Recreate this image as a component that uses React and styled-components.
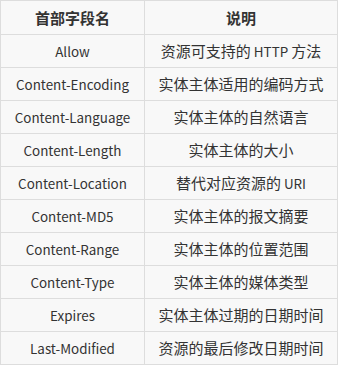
import React from "react";
import styled, { createGlobalStyle } from "styled-components";

const Global = createGlobalStyle`
  html, body { margin: 0; padding: 0; background: #ffffff; }
  body { font-family: "Noto Sans CJK SC", "Noto Sans", sans-serif; }
`;

const Table = styled.table`
  border-collapse: collapse;
  width: 337px;
  table-layout: fixed;
  background: #f8f8f8;
  color: #333333;
  font-size: 13.4px;
`;

const Col = styled.col`
  width: ${(p) => p.$w}px;
`;

const Head = styled.th`
  height: 33px;
  padding: 0;
  border: 1px solid #dddddd;
  font-weight: 700;
  text-align: center;
  line-height: 20px;
`;

const Cell = styled.td`
  height: 32px;
  padding: 0;
  border: 1px solid #dddddd;
  text-align: center;
  line-height: 20px;
  white-space: nowrap;
`;

const Han = styled.span`
  font-size: 15px;
`;

const HAN_RE = /([\u3000-\u9fff]+)/;

function Mixed({ text }) {
  return text
    .split(HAN_RE)
    .filter(Boolean)
    .map((part, i) =>
      HAN_RE.test(part) ? <Han key={i}>{part}</Han> : <React.Fragment key={i}>{part}</React.Fragment>
    );
}

const rows = [
  ["Allow", "资源可支持的 HTTP 方法"],
  ["Content-Encoding", "实体主体适用的编码方式"],
  ["Content-Language", "实体主体的自然语言"],
  ["Content-Length", "实体主体的大小"],
  ["Content-Location", "替代对应资源的 URI"],
  ["Content-MD5", "实体主体的报文摘要"],
  ["Content-Range", "实体主体的位置范围"],
  ["Content-Type", "实体主体的媒体类型"],
  ["Expires", "实体主体过期的日期时间"],
  ["Last-Modified", "资源的最后修改日期时间"],
];

export default function App() {
  return (
    <>
      <Global />
      <Table>
        <colgroup>
          <Col $w={144} />
          <Col $w={193} />
        </colgroup>
        <thead>
          <tr>
            <Head><Mixed text="首部字段名" /></Head>
            <Head><Mixed text="说明" /></Head>
          </tr>
        </thead>
        <tbody>
          {rows.map(([a, b]) => (
            <tr key={a}>
              <Cell>{a}</Cell>
              <Cell><Mixed text={b} /></Cell>
            </tr>
          ))}
        </tbody>
      </Table>
    </>
  );
}
